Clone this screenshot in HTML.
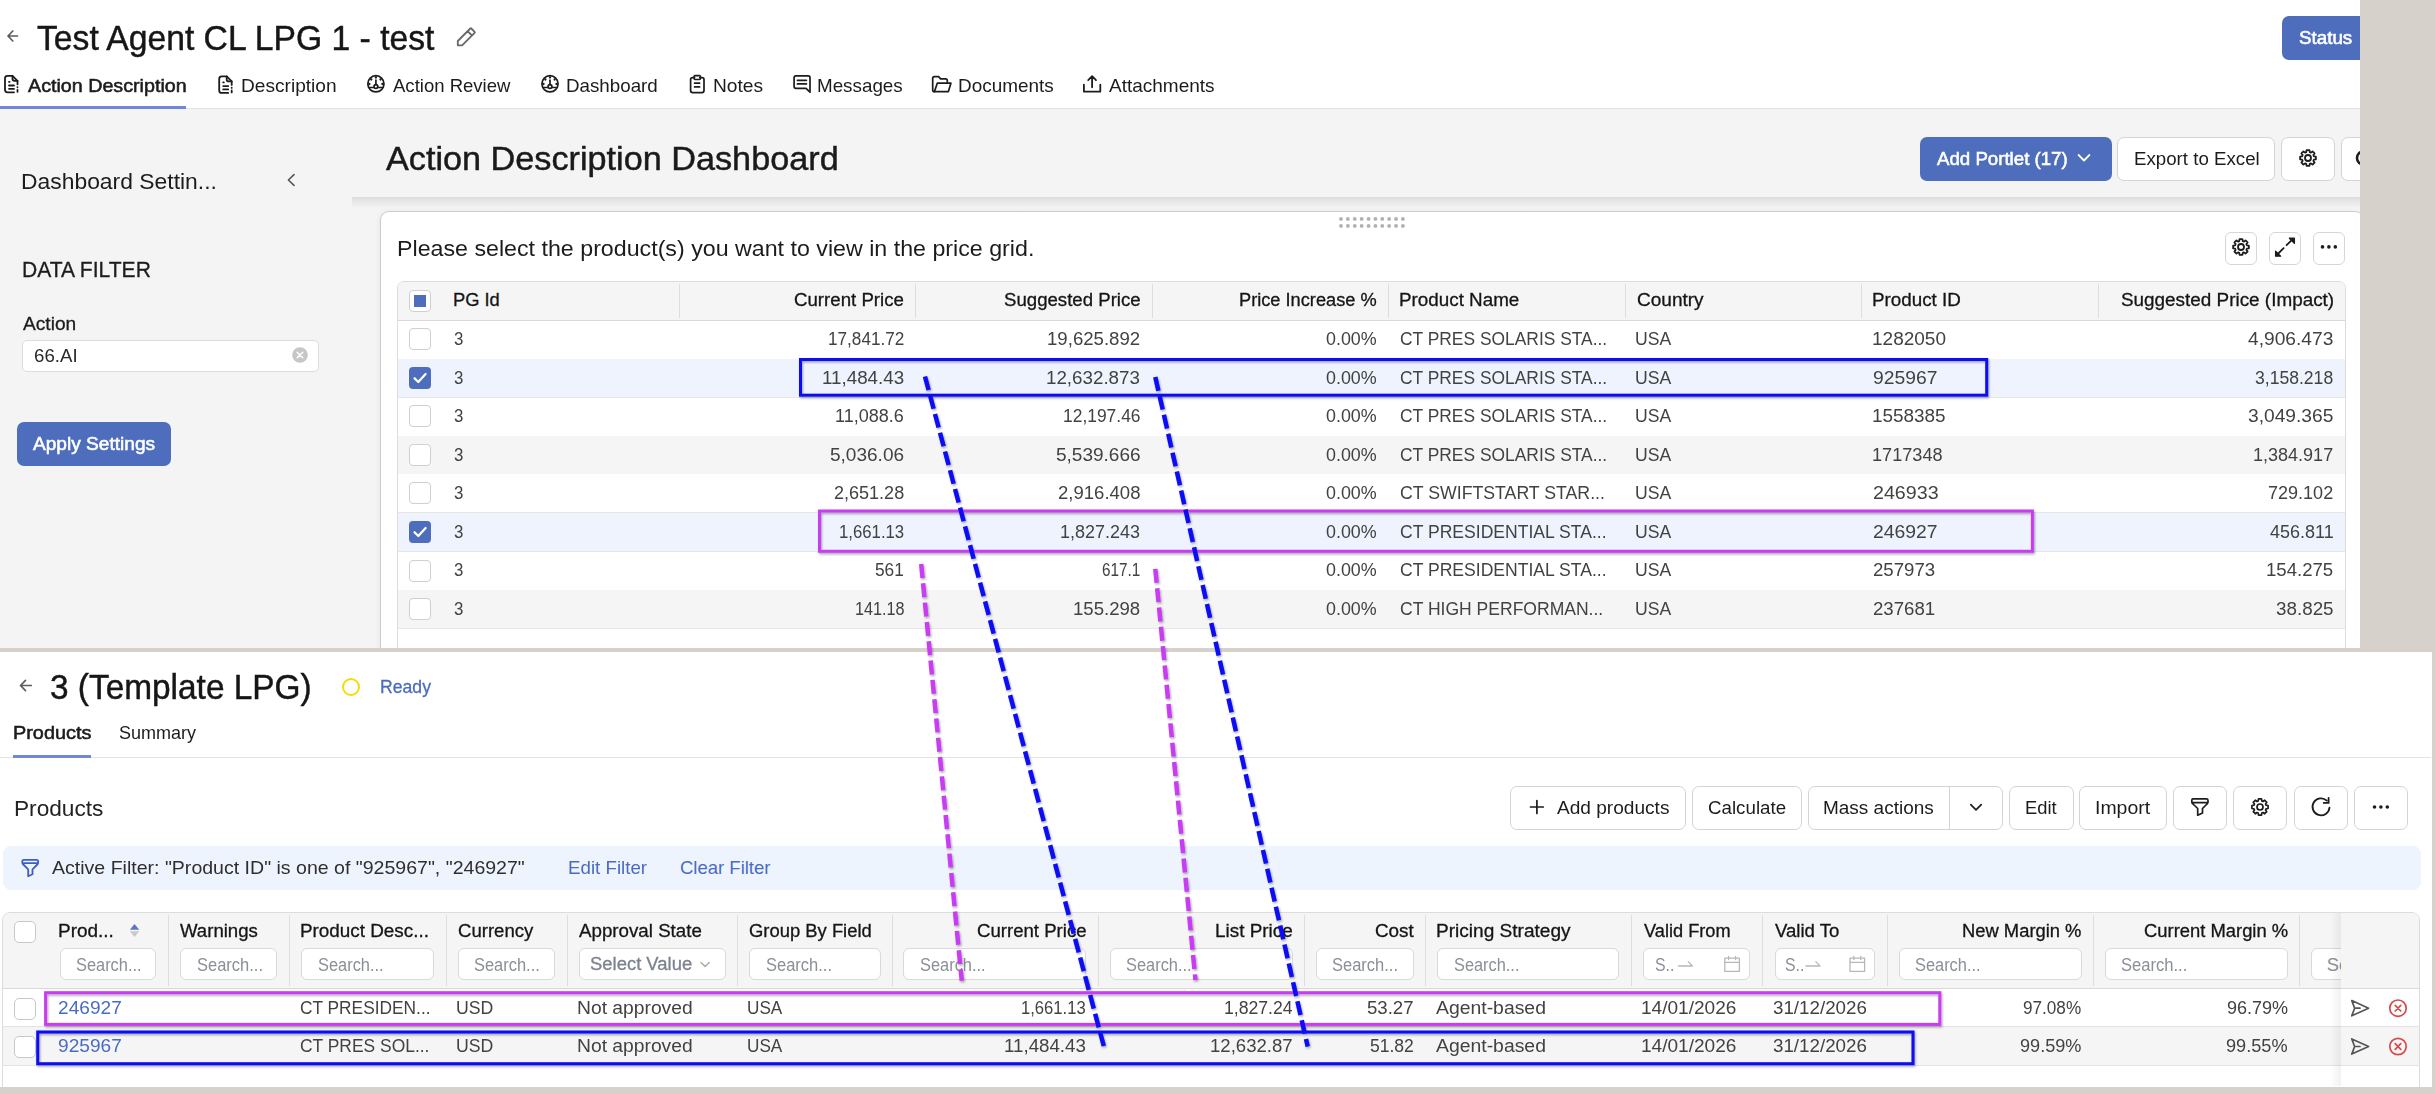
<!DOCTYPE html>
<html><head><meta charset="utf-8"><style>
html,body{margin:0;padding:0;}
body{width:2435px;height:1094px;position:relative;overflow:hidden;background:#ffffff;font-family:"Liberation Sans",sans-serif;}
body>div{position:absolute;box-sizing:border-box;}
.t{white-space:nowrap;line-height:1.117;transform-origin:0 0;}
svg{position:absolute;overflow:visible;}
</style></head><body>
<div style="left:0px;top:108px;width:2360px;height:1px;background:#e3e3e3"></div>
<div style="left:0px;top:109px;width:2360px;height:539px;background:#f4f4f4"></div>
<div style="left:0px;top:106px;width:186px;height:3px;background:#6d88d6"></div>
<div style="left:352px;top:197px;width:2008px;height:14px;background:linear-gradient(#dcdcdc,#ebebeb 45%,#f3f3f3 80%,#f4f4f4)"></div>
<div style="left:380px;top:211px;width:1984px;height:460px;background:#fff;border:1px solid #cccccc;border-radius:9px;box-shadow:-2px 0 4px rgba(0,0,0,0.04)"></div>
<div style="left:2360px;top:0px;width:75px;height:652px;background:#d6d1cb"></div>
<div class="t" style="left:37.10px;top:18.99px;font-size:34.6px;font-weight:400;color:#161616;-webkit-text-stroke:0.45px #161616;transform:scaleX(0.9738);">Test Agent CL LPG 1 - test</div>
<div style="left:2282px;top:16px;width:90px;height:44px;background:#4e6ebd;border-radius:7px"></div>
<div class="t" style="left:2299.10px;top:28.47px;font-size:18.6px;font-weight:400;color:#ffffff;-webkit-text-stroke:0.55px #ffffff;transform:scaleX(1.0092);">Status</div>
<div class="t" style="left:27.70px;top:76.47px;font-size:18.6px;font-weight:400;color:#1c1c1c;-webkit-text-stroke:0.55px #1c1c1c;transform:scaleX(1.0588);">Action Description</div>
<div class="t" style="left:241.37px;top:76.47px;font-size:18.6px;font-weight:400;color:#1c1c1c;transform:scaleX(1.0277);">Description</div>
<div class="t" style="left:393.00px;top:76.47px;font-size:18.6px;font-weight:400;color:#1c1c1c;transform:scaleX(0.9968);">Action Review</div>
<div class="t" style="left:565.59px;top:76.47px;font-size:18.6px;font-weight:400;color:#1c1c1c;transform:scaleX(1.0087);">Dashboard</div>
<div class="t" style="left:712.67px;top:76.47px;font-size:18.6px;font-weight:400;color:#1c1c1c;transform:scaleX(1.0322);">Notes</div>
<div class="t" style="left:817.29px;top:76.47px;font-size:18.6px;font-weight:400;color:#1c1c1c;transform:scaleX(1.0114);">Messages</div>
<div class="t" style="left:957.58px;top:76.47px;font-size:18.6px;font-weight:400;color:#1c1c1c;transform:scaleX(1.0179);">Documents</div>
<div class="t" style="left:1109.30px;top:76.47px;font-size:18.6px;font-weight:400;color:#1c1c1c;transform:scaleX(1.0218);">Attachments</div>
<div class="t" style="left:21.38px;top:168.94px;font-size:22.5px;font-weight:400;color:#1c1c1c;transform:scaleX(1.0170);">Dashboard Settin...</div>
<div class="t" style="left:22.47px;top:256.67px;font-size:22.8px;font-weight:400;color:#1c1c1c;-webkit-text-stroke:0.3px #1c1c1c;transform:scaleX(0.9251);">DATA FILTER</div>
<div class="t" style="left:22.70px;top:314.47px;font-size:18.6px;font-weight:400;color:#1c1c1c;-webkit-text-stroke:0.3px #1c1c1c;transform:scaleX(1.0285);">Action</div>
<div style="left:22px;top:340px;width:297px;height:32px;background:#fff;border:1px solid #dcdcdc;border-radius:5px"></div>
<div class="t" style="left:33.90px;top:345.83px;font-size:18.2px;font-weight:400;color:#2a2a2a;transform:scaleX(1.0262);">66.AI</div>
<div style="left:17px;top:422px;width:154px;height:44px;background:#4e6ebd;border-radius:7px"></div>
<div class="t" style="left:33.30px;top:433.29px;font-size:18.8px;font-weight:400;color:#ffffff;-webkit-text-stroke:0.55px #ffffff;transform:scaleX(1.0170);">Apply Settings</div>
<div class="t" style="left:386.00px;top:139.98px;font-size:33.5px;font-weight:400;color:#1a1a1a;-webkit-text-stroke:0.45px #1a1a1a;transform:scaleX(1.0214);">Action Description Dashboard</div>
<div style="left:1920px;top:137px;width:192px;height:44px;background:#4e6ebd;border-radius:7px"></div>
<div class="t" style="left:1936.60px;top:148.74px;font-size:18.3px;font-weight:400;color:#ffffff;-webkit-text-stroke:0.55px #ffffff;transform:scaleX(1.0209);">Add Portlet (17)</div>
<div style="left:2117px;top:137px;width:158px;height:44px;background:#fff;border:1px solid #d4d4d4;border-radius:7px"></div>
<div class="t" style="left:2133.51px;top:148.20px;font-size:18.9px;font-weight:400;color:#1c1c1c;transform:scaleX(0.9892);">Export to Excel</div>
<div style="left:2281px;top:137px;width:54px;height:44px;background:#fff;border:1px solid #d4d4d4;border-radius:7px"></div>
<div style="left:2341px;top:137px;width:40px;height:44px;background:#fff;border:1px solid #d4d4d4;border-radius:7px"></div>
<div class="t" style="left:396.97px;top:235.94px;font-size:22.5px;font-weight:400;color:#1c1c1c;transform:scaleX(1.0316);">Please select the product(s) you want to view in the price grid.</div>
<div style="left:2225px;top:232px;width:32px;height:33px;background:#fff;border:1px solid #d6d6d6;border-radius:6px"></div>
<div style="left:2269px;top:232px;width:32px;height:33px;background:#fff;border:1px solid #d6d6d6;border-radius:6px"></div>
<div style="left:2313px;top:232px;width:32px;height:33px;background:#fff;border:1px solid #d6d6d6;border-radius:6px"></div>
<div style="left:397px;top:281px;width:1949px;height:380px;border:1px solid #dcdcdc;border-radius:7px;background:#fff"></div>
<div style="left:398px;top:282px;width:1947px;height:38px;background:#f5f5f5;border-radius:6px 6px 0 0"></div>
<div style="left:397px;top:320px;width:1949px;height:1px;background:#d9d9d9"></div>
<div style="left:398px;top:321px;width:1947px;height:38px;background:#ffffff"></div>
<div style="left:398px;top:359px;width:1947px;height:1px;background:#e6e6e6"></div>
<div style="left:398px;top:359px;width:1947px;height:38px;background:#eff3fd"></div>
<div style="left:398px;top:397px;width:1947px;height:1px;background:#e6e6e6"></div>
<div style="left:398px;top:398px;width:1947px;height:38px;background:#ffffff"></div>
<div style="left:398px;top:436px;width:1947px;height:1px;background:#e6e6e6"></div>
<div style="left:398px;top:436px;width:1947px;height:38px;background:#f5f5f5"></div>
<div style="left:398px;top:474px;width:1947px;height:1px;background:#e6e6e6"></div>
<div style="left:398px;top:474px;width:1947px;height:38px;background:#ffffff"></div>
<div style="left:398px;top:512px;width:1947px;height:1px;background:#e6e6e6"></div>
<div style="left:398px;top:513px;width:1947px;height:38px;background:#eff3fd"></div>
<div style="left:398px;top:551px;width:1947px;height:1px;background:#e6e6e6"></div>
<div style="left:398px;top:552px;width:1947px;height:38px;background:#ffffff"></div>
<div style="left:398px;top:590px;width:1947px;height:1px;background:#e6e6e6"></div>
<div style="left:398px;top:590px;width:1947px;height:38px;background:#f5f5f5"></div>
<div style="left:398px;top:628px;width:1947px;height:1px;background:#e6e6e6"></div>
<div style="left:679px;top:284px;width:1px;height:34px;background:#dedede"></div>
<div style="left:915px;top:284px;width:1px;height:34px;background:#dedede"></div>
<div style="left:1152px;top:284px;width:1px;height:34px;background:#dedede"></div>
<div style="left:1388px;top:284px;width:1px;height:34px;background:#dedede"></div>
<div style="left:1625px;top:284px;width:1px;height:34px;background:#dedede"></div>
<div style="left:1861px;top:284px;width:1px;height:34px;background:#dedede"></div>
<div style="left:2098px;top:284px;width:1px;height:34px;background:#dedede"></div>
<div class="t" style="left:453.00px;top:289.74px;font-size:18.3px;font-weight:400;color:#151515;-webkit-text-stroke:0.3px #151515;">PG Id</div>
<div class="t" style="left:794.20px;top:289.74px;font-size:18.3px;font-weight:400;color:#151515;-webkit-text-stroke:0.3px #151515;transform:scaleX(1.0203);">Current Price</div>
<div class="t" style="left:1003.50px;top:289.74px;font-size:18.3px;font-weight:400;color:#151515;-webkit-text-stroke:0.3px #151515;transform:scaleX(1.0188);">Suggested Price</div>
<div class="t" style="left:1239.00px;top:289.74px;font-size:18.3px;font-weight:400;color:#151515;-webkit-text-stroke:0.3px #151515;transform:scaleX(0.9962);">Price Increase %</div>
<div class="t" style="left:1399.37px;top:289.74px;font-size:18.3px;font-weight:400;color:#151515;-webkit-text-stroke:0.3px #151515;transform:scaleX(1.0296);">Product Name</div>
<div class="t" style="left:1636.50px;top:289.74px;font-size:18.3px;font-weight:400;color:#151515;-webkit-text-stroke:0.3px #151515;transform:scaleX(1.0405);">Country</div>
<div class="t" style="left:1871.97px;top:289.74px;font-size:18.3px;font-weight:400;color:#151515;-webkit-text-stroke:0.3px #151515;transform:scaleX(1.0286);">Product ID</div>
<div class="t" style="left:2121.00px;top:289.74px;font-size:18.3px;font-weight:400;color:#151515;-webkit-text-stroke:0.3px #151515;transform:scaleX(1.0333);">Suggested Price (Impact)</div>
<div class="t" style="left:454.20px;top:328.74px;font-size:18.3px;font-weight:400;color:#424242;transform:scaleX(0.9200);">3</div>
<div class="t" style="left:827.76px;top:328.74px;font-size:18.3px;font-weight:400;color:#424242;transform:scaleX(0.9381);">17,841.72</div>
<div class="t" style="left:1047.18px;top:328.74px;font-size:18.3px;font-weight:400;color:#424242;transform:scaleX(1.0185);">19,625.892</div>
<div class="t" style="left:1326.00px;top:328.74px;font-size:18.3px;font-weight:400;color:#424242;transform:scaleX(0.9771);">0.00%</div>
<div class="t" style="left:1399.50px;top:328.74px;font-size:18.3px;font-weight:400;color:#424242;transform:scaleX(0.9516);">CT PRES SOLARIS STA...</div>
<div class="t" style="left:1634.64px;top:328.74px;font-size:18.3px;font-weight:400;color:#424242;transform:scaleX(0.9627);">USA</div>
<div class="t" style="left:1871.56px;top:328.74px;font-size:18.3px;font-weight:400;color:#424242;transform:scaleX(1.0400);">1282050</div>
<div class="t" style="left:2247.80px;top:328.74px;font-size:18.3px;font-weight:400;color:#424242;transform:scaleX(1.0498);">4,906.473</div>
<div style="left:409px;top:328px;width:22px;height:22px;background:#fff;border:1px solid #cfcfcf;border-radius:4px"></div>
<div class="t" style="left:454.20px;top:367.74px;font-size:18.3px;font-weight:400;color:#424242;transform:scaleX(0.9200);">3</div>
<div class="t" style="left:821.97px;top:367.74px;font-size:18.3px;font-weight:400;color:#424242;transform:scaleX(1.0266);">11,484.43</div>
<div class="t" style="left:1046.47px;top:367.74px;font-size:18.3px;font-weight:400;color:#424242;transform:scaleX(1.0263);">12,632.873</div>
<div class="t" style="left:1326.00px;top:367.74px;font-size:18.3px;font-weight:400;color:#424242;transform:scaleX(0.9771);">0.00%</div>
<div class="t" style="left:1399.50px;top:367.74px;font-size:18.3px;font-weight:400;color:#424242;transform:scaleX(0.9516);">CT PRES SOLARIS STA...</div>
<div class="t" style="left:1634.64px;top:367.74px;font-size:18.3px;font-weight:400;color:#424242;transform:scaleX(0.9627);">USA</div>
<div class="t" style="left:1872.60px;top:367.74px;font-size:18.3px;font-weight:400;color:#424242;transform:scaleX(1.0553);">925967</div>
<div class="t" style="left:2255.00px;top:367.74px;font-size:18.3px;font-weight:400;color:#424242;transform:scaleX(0.9611);">3,158.218</div>
<div style="left:409px;top:367px;width:22px;height:22px;background:#4e6ebd;border-radius:4px"></div>
<svg style="left:409px;top:367px" width="22" height="22" viewBox="0 0 22 22"><path d="M5.5 11.2 L9.3 15 L16.6 7" fill="none" stroke="#fff" stroke-width="2.2" stroke-linecap="round" stroke-linejoin="round"/></svg>
<div class="t" style="left:454.20px;top:405.74px;font-size:18.3px;font-weight:400;color:#424242;transform:scaleX(0.9200);">3</div>
<div class="t" style="left:835.32px;top:405.74px;font-size:18.3px;font-weight:400;color:#424242;transform:scaleX(0.9849);">11,088.6</div>
<div class="t" style="left:1062.85px;top:405.74px;font-size:18.3px;font-weight:400;color:#424242;transform:scaleX(0.9531);">12,197.46</div>
<div class="t" style="left:1326.00px;top:405.74px;font-size:18.3px;font-weight:400;color:#424242;transform:scaleX(0.9771);">0.00%</div>
<div class="t" style="left:1399.50px;top:405.74px;font-size:18.3px;font-weight:400;color:#424242;transform:scaleX(0.9516);">CT PRES SOLARIS STA...</div>
<div class="t" style="left:1634.64px;top:405.74px;font-size:18.3px;font-weight:400;color:#424242;transform:scaleX(0.9627);">USA</div>
<div class="t" style="left:1871.57px;top:405.74px;font-size:18.3px;font-weight:400;color:#424242;transform:scaleX(1.0342);">1558385</div>
<div class="t" style="left:2247.80px;top:405.74px;font-size:18.3px;font-weight:400;color:#424242;transform:scaleX(1.0498);">3,049.365</div>
<div style="left:409px;top:405px;width:22px;height:22px;background:#fff;border:1px solid #cfcfcf;border-radius:4px"></div>
<div class="t" style="left:454.20px;top:444.74px;font-size:18.3px;font-weight:400;color:#424242;transform:scaleX(0.9200);">3</div>
<div class="t" style="left:830.00px;top:444.74px;font-size:18.3px;font-weight:400;color:#424242;transform:scaleX(1.0409);">5,036.06</div>
<div class="t" style="left:1055.80px;top:444.74px;font-size:18.3px;font-weight:400;color:#424242;transform:scaleX(1.0399);">5,539.666</div>
<div class="t" style="left:1326.00px;top:444.74px;font-size:18.3px;font-weight:400;color:#424242;transform:scaleX(0.9771);">0.00%</div>
<div class="t" style="left:1399.50px;top:444.74px;font-size:18.3px;font-weight:400;color:#424242;transform:scaleX(0.9516);">CT PRES SOLARIS STA...</div>
<div class="t" style="left:1634.64px;top:444.74px;font-size:18.3px;font-weight:400;color:#424242;transform:scaleX(0.9627);">USA</div>
<div class="t" style="left:1871.61px;top:444.74px;font-size:18.3px;font-weight:400;color:#424242;transform:scaleX(0.9914);">1717348</div>
<div class="t" style="left:2253.01px;top:444.74px;font-size:18.3px;font-weight:400;color:#424242;transform:scaleX(0.9855);">1,384.917</div>
<div style="left:409px;top:444px;width:22px;height:22px;background:#fff;border:1px solid #cfcfcf;border-radius:4px"></div>
<div class="t" style="left:454.20px;top:482.74px;font-size:18.3px;font-weight:400;color:#424242;transform:scaleX(0.9200);">3</div>
<div class="t" style="left:833.90px;top:482.74px;font-size:18.3px;font-weight:400;color:#424242;transform:scaleX(0.9860);">2,651.28</div>
<div class="t" style="left:1057.90px;top:482.74px;font-size:18.3px;font-weight:400;color:#424242;transform:scaleX(1.0140);">2,916.408</div>
<div class="t" style="left:1326.00px;top:482.74px;font-size:18.3px;font-weight:400;color:#424242;transform:scaleX(0.9771);">0.00%</div>
<div class="t" style="left:1399.50px;top:482.74px;font-size:18.3px;font-weight:400;color:#424242;transform:scaleX(0.9684);">CT SWIFTSTART STAR...</div>
<div class="t" style="left:1634.64px;top:482.74px;font-size:18.3px;font-weight:400;color:#424242;transform:scaleX(0.9627);">USA</div>
<div class="t" style="left:1872.60px;top:482.74px;font-size:18.3px;font-weight:400;color:#424242;transform:scaleX(1.0750);">246933</div>
<div class="t" style="left:2268.00px;top:482.74px;font-size:18.3px;font-weight:400;color:#424242;transform:scaleX(0.9861);">729.102</div>
<div style="left:409px;top:482px;width:22px;height:22px;background:#fff;border:1px solid #cfcfcf;border-radius:4px"></div>
<div class="t" style="left:454.20px;top:521.74px;font-size:18.3px;font-weight:400;color:#424242;transform:scaleX(0.9200);">3</div>
<div class="t" style="left:838.88px;top:521.74px;font-size:18.3px;font-weight:400;color:#424242;transform:scaleX(0.9158);">1,661.13</div>
<div class="t" style="left:1060.42px;top:521.74px;font-size:18.3px;font-weight:400;color:#424242;transform:scaleX(0.9830);">1,827.243</div>
<div class="t" style="left:1326.00px;top:521.74px;font-size:18.3px;font-weight:400;color:#424242;transform:scaleX(0.9771);">0.00%</div>
<div class="t" style="left:1399.50px;top:521.74px;font-size:18.3px;font-weight:400;color:#424242;transform:scaleX(0.9607);">CT PRESIDENTIAL STA...</div>
<div class="t" style="left:1634.64px;top:521.74px;font-size:18.3px;font-weight:400;color:#424242;transform:scaleX(0.9627);">USA</div>
<div class="t" style="left:1872.60px;top:521.74px;font-size:18.3px;font-weight:400;color:#424242;transform:scaleX(1.0586);">246927</div>
<div class="t" style="left:2269.50px;top:521.74px;font-size:18.3px;font-weight:400;color:#424242;transform:scaleX(0.9836);">456.811</div>
<div style="left:409px;top:521px;width:22px;height:22px;background:#4e6ebd;border-radius:4px"></div>
<svg style="left:409px;top:521px" width="22" height="22" viewBox="0 0 22 22"><path d="M5.5 11.2 L9.3 15 L16.6 7" fill="none" stroke="#fff" stroke-width="2.2" stroke-linecap="round" stroke-linejoin="round"/></svg>
<div class="t" style="left:454.20px;top:559.74px;font-size:18.3px;font-weight:400;color:#424242;transform:scaleX(0.9200);">3</div>
<div class="t" style="left:875.20px;top:559.74px;font-size:18.3px;font-weight:400;color:#424242;transform:scaleX(0.9461);">561</div>
<div class="t" style="left:1102.00px;top:559.74px;font-size:18.3px;font-weight:400;color:#424242;transform:scaleX(0.8381);">617.1</div>
<div class="t" style="left:1326.00px;top:559.74px;font-size:18.3px;font-weight:400;color:#424242;transform:scaleX(0.9771);">0.00%</div>
<div class="t" style="left:1399.50px;top:559.74px;font-size:18.3px;font-weight:400;color:#424242;transform:scaleX(0.9607);">CT PRESIDENTIAL STA...</div>
<div class="t" style="left:1634.64px;top:559.74px;font-size:18.3px;font-weight:400;color:#424242;transform:scaleX(0.9627);">USA</div>
<div class="t" style="left:1872.60px;top:559.74px;font-size:18.3px;font-weight:400;color:#424242;transform:scaleX(1.0191);">257973</div>
<div class="t" style="left:2265.98px;top:559.74px;font-size:18.3px;font-weight:400;color:#424242;transform:scaleX(1.0167);">154.275</div>
<div style="left:409px;top:560px;width:22px;height:22px;background:#fff;border:1px solid #cfcfcf;border-radius:4px"></div>
<div class="t" style="left:454.20px;top:598.74px;font-size:18.3px;font-weight:400;color:#424242;transform:scaleX(0.9200);">3</div>
<div class="t" style="left:854.51px;top:598.74px;font-size:18.3px;font-weight:400;color:#424242;transform:scaleX(0.8859);">141.18</div>
<div class="t" style="left:1073.18px;top:598.74px;font-size:18.3px;font-weight:400;color:#424242;transform:scaleX(1.0167);">155.298</div>
<div class="t" style="left:1326.00px;top:598.74px;font-size:18.3px;font-weight:400;color:#424242;transform:scaleX(0.9771);">0.00%</div>
<div class="t" style="left:1399.50px;top:598.74px;font-size:18.3px;font-weight:400;color:#424242;transform:scaleX(0.9589);">CT HIGH PERFORMAN...</div>
<div class="t" style="left:1634.64px;top:598.74px;font-size:18.3px;font-weight:400;color:#424242;transform:scaleX(0.9627);">USA</div>
<div class="t" style="left:1872.60px;top:598.74px;font-size:18.3px;font-weight:400;color:#424242;transform:scaleX(1.0191);">237681</div>
<div class="t" style="left:2275.60px;top:598.74px;font-size:18.3px;font-weight:400;color:#424242;transform:scaleX(1.0296);">38.825</div>
<div style="left:409px;top:598px;width:22px;height:22px;background:#fff;border:1px solid #cfcfcf;border-radius:4px"></div>
<div style="left:409px;top:290px;width:22px;height:22px;background:#fff;border:1px solid #cfcfcf;border-radius:4px"></div>
<div style="left:414px;top:295px;width:12px;height:12px;background:#4e6ebd"></div>
<div style="left:0px;top:652px;width:2435px;height:442px;background:#ffffff"></div>
<div style="left:0px;top:648px;width:2435px;height:4px;background:#d6d1cb"></div>
<div class="t" style="left:50.13px;top:668.26px;font-size:34.3px;font-weight:400;color:#161616;-webkit-text-stroke:0.45px #161616;transform:scaleX(0.9736);">3 (Template LPG)</div>
<div style="left:342px;top:678px;width:18px;height:18px;border:2px solid #f2dc0a;border-radius:50%"></div>
<div class="t" style="left:379.65px;top:676.56px;font-size:18.5px;font-weight:400;color:#4a6bc4;-webkit-text-stroke:0.3px #4a6bc4;transform:scaleX(0.9525);">Ready</div>
<div class="t" style="left:12.51px;top:722.83px;font-size:18.2px;font-weight:400;color:#1c1c1c;-webkit-text-stroke:0.55px #1c1c1c;transform:scaleX(1.0923);">Products</div>
<div class="t" style="left:119.20px;top:722.83px;font-size:18.2px;font-weight:400;color:#1c1c1c;transform:scaleX(0.9909);">Summary</div>
<div style="left:0px;top:757px;width:2431px;height:1px;background:#e3e3e3"></div>
<div style="left:13px;top:755px;width:78px;height:3px;background:#6d88d6"></div>
<div class="t" style="left:13.90px;top:795.85px;font-size:22.6px;font-weight:400;color:#222222;transform:scaleX(1.0027);">Products</div>
<div style="left:1510px;top:786px;width:176px;height:44px;background:#fff;border:1px solid #d4d4d4;border-radius:7px"></div>
<div style="left:1692px;top:786px;width:110px;height:44px;background:#fff;border:1px solid #d4d4d4;border-radius:7px"></div>
<div style="left:1808px;top:786px;width:195px;height:44px;background:#fff;border:1px solid #d4d4d4;border-radius:7px"></div>
<div style="left:2009px;top:786px;width:65px;height:44px;background:#fff;border:1px solid #d4d4d4;border-radius:7px"></div>
<div style="left:2079px;top:786px;width:88px;height:44px;background:#fff;border:1px solid #d4d4d4;border-radius:7px"></div>
<div style="left:2173px;top:786px;width:54px;height:44px;background:#fff;border:1px solid #d4d4d4;border-radius:7px"></div>
<div style="left:2233px;top:786px;width:54px;height:44px;background:#fff;border:1px solid #d4d4d4;border-radius:7px"></div>
<div style="left:2294px;top:786px;width:54px;height:44px;background:#fff;border:1px solid #d4d4d4;border-radius:7px"></div>
<div style="left:2354px;top:786px;width:54px;height:44px;background:#fff;border:1px solid #d4d4d4;border-radius:7px"></div>
<div style="left:1949px;top:787px;width:1px;height:42px;background:#d4d4d4"></div>
<div class="t" style="left:1557.30px;top:798.38px;font-size:18.7px;font-weight:400;color:#1c1c1c;transform:scaleX(1.0212);">Add products</div>
<div class="t" style="left:1708.20px;top:798.38px;font-size:18.7px;font-weight:400;color:#1c1c1c;transform:scaleX(1.0024);">Calculate</div>
<div class="t" style="left:1823.28px;top:798.38px;font-size:18.7px;font-weight:400;color:#1c1c1c;transform:scaleX(1.0157);">Mass actions</div>
<div class="t" style="left:2024.92px;top:798.38px;font-size:18.7px;font-weight:400;color:#1c1c1c;transform:scaleX(0.9810);">Edit</div>
<div class="t" style="left:2094.66px;top:798.38px;font-size:18.7px;font-weight:400;color:#1c1c1c;transform:scaleX(1.0404);">Import</div>
<div style="left:3px;top:846px;width:2418px;height:44px;background:#eef4fe;border-radius:8px"></div>
<div class="t" style="left:52.40px;top:857.56px;font-size:18.5px;font-weight:400;color:#2e2e2e;transform:scaleX(1.0561);">Active Filter: &quot;Product ID&quot; is one of &quot;925967&quot;, &quot;246927&quot;</div>
<div class="t" style="left:568.29px;top:857.56px;font-size:18.5px;font-weight:400;color:#4a6bc4;transform:scaleX(1.0121);">Edit Filter</div>
<div class="t" style="left:680.00px;top:857.56px;font-size:18.5px;font-weight:400;color:#4a6bc4;">Clear Filter</div>
<div style="left:2px;top:912px;width:2418px;height:200px;border:1px solid #dcdcdc;border-radius:8px;background:#fff"></div>
<div style="left:3px;top:913px;width:2416px;height:75px;background:#f5f5f5;border-radius:7px 7px 0 0"></div>
<div style="left:2px;top:988px;width:2418px;height:1px;background:#d9d9d9"></div>
<div style="left:3px;top:1027px;width:2416px;height:38px;background:#f5f5f5"></div>
<div style="left:2px;top:1026px;width:2418px;height:1px;background:#e3e3e3"></div>
<div style="left:2px;top:1065px;width:2418px;height:1px;background:#e3e3e3"></div>
<div style="left:168px;top:915px;width:1px;height:71px;background:#dedede"></div>
<div style="left:289px;top:915px;width:1px;height:71px;background:#dedede"></div>
<div style="left:446px;top:915px;width:1px;height:71px;background:#dedede"></div>
<div style="left:567px;top:915px;width:1px;height:71px;background:#dedede"></div>
<div style="left:737px;top:915px;width:1px;height:71px;background:#dedede"></div>
<div style="left:892px;top:915px;width:1px;height:71px;background:#dedede"></div>
<div style="left:1098px;top:915px;width:1px;height:71px;background:#dedede"></div>
<div style="left:1304px;top:915px;width:1px;height:71px;background:#dedede"></div>
<div style="left:1425px;top:915px;width:1px;height:71px;background:#dedede"></div>
<div style="left:1631px;top:915px;width:1px;height:71px;background:#dedede"></div>
<div style="left:1762px;top:915px;width:1px;height:71px;background:#dedede"></div>
<div style="left:1887px;top:915px;width:1px;height:71px;background:#dedede"></div>
<div style="left:2093px;top:915px;width:1px;height:71px;background:#dedede"></div>
<div style="left:2299px;top:915px;width:1px;height:71px;background:#dedede"></div>
<div style="left:14px;top:921px;width:22px;height:22px;background:#fff;border:1px solid #c8c8c8;border-radius:5px"></div>
<div class="t" style="left:57.96px;top:920.74px;font-size:18.3px;font-weight:400;color:#151515;-webkit-text-stroke:0.3px #151515;transform:scaleX(1.0372);">Prod...</div>
<div style="left:59.6px;top:948px;width:96.70000000000002px;height:32px;background:#fff;border:1px solid #d9d9d9;border-radius:6px"></div>
<div class="t" style="left:75.80px;top:954.74px;font-size:18.3px;font-weight:400;color:#8a8f98;transform:scaleX(0.8962);">Search...</div>
<div class="t" style="left:180.30px;top:920.74px;font-size:18.3px;font-weight:400;color:#151515;-webkit-text-stroke:0.3px #151515;transform:scaleX(1.0171);">Warnings</div>
<div style="left:180.3px;top:948px;width:96.89999999999998px;height:32px;background:#fff;border:1px solid #d9d9d9;border-radius:6px"></div>
<div class="t" style="left:196.60px;top:954.74px;font-size:18.3px;font-weight:400;color:#8a8f98;transform:scaleX(0.9018);">Search...</div>
<div class="t" style="left:300.17px;top:920.74px;font-size:18.3px;font-weight:400;color:#151515;-webkit-text-stroke:0.3px #151515;transform:scaleX(1.0318);">Product Desc...</div>
<div style="left:301.2px;top:948px;width:133.0px;height:32px;background:#fff;border:1px solid #d9d9d9;border-radius:6px"></div>
<div class="t" style="left:317.80px;top:954.74px;font-size:18.3px;font-weight:400;color:#8a8f98;transform:scaleX(0.8976);">Search...</div>
<div class="t" style="left:458.20px;top:920.74px;font-size:18.3px;font-weight:400;color:#151515;-webkit-text-stroke:0.3px #151515;transform:scaleX(1.0157);">Currency</div>
<div style="left:458.2px;top:948px;width:96.80000000000001px;height:32px;background:#fff;border:1px solid #d9d9d9;border-radius:6px"></div>
<div class="t" style="left:474.00px;top:954.74px;font-size:18.3px;font-weight:400;color:#8a8f98;transform:scaleX(0.8990);">Search...</div>
<div class="t" style="left:579.40px;top:920.74px;font-size:18.3px;font-weight:400;color:#151515;-webkit-text-stroke:0.3px #151515;transform:scaleX(1.0246);">Approval State</div>
<div style="left:579.4px;top:948px;width:146.80000000000007px;height:32px;background:#fff;border:1px solid #d9d9d9;border-radius:6px"></div>
<div class="t" style="left:590.20px;top:953.74px;font-size:18.3px;font-weight:400;color:#7b828f;-webkit-text-stroke:0.3px #7b828f;transform:scaleX(1.0087);">Select Value</div>
<div class="t" style="left:749.40px;top:920.74px;font-size:18.3px;font-weight:400;color:#151515;-webkit-text-stroke:0.3px #151515;transform:scaleX(1.0070);">Group By Field</div>
<div style="left:749.4px;top:948px;width:131.20000000000005px;height:32px;background:#fff;border:1px solid #d9d9d9;border-radius:6px"></div>
<div class="t" style="left:765.70px;top:954.74px;font-size:18.3px;font-weight:400;color:#8a8f98;transform:scaleX(0.9018);">Search...</div>
<div class="t" style="left:976.60px;top:920.74px;font-size:18.3px;font-weight:400;color:#151515;-webkit-text-stroke:0.3px #151515;transform:scaleX(1.0175);">Current Price</div>
<div style="left:902.9px;top:948px;width:183.10000000000002px;height:32px;background:#fff;border:1px solid #d9d9d9;border-radius:6px"></div>
<div class="t" style="left:919.70px;top:954.74px;font-size:18.3px;font-weight:400;color:#8a8f98;transform:scaleX(0.8976);">Search...</div>
<div class="t" style="left:1214.97px;top:920.74px;font-size:18.3px;font-weight:400;color:#151515;-webkit-text-stroke:0.3px #151515;transform:scaleX(1.0336);">List Price</div>
<div style="left:1110px;top:948px;width:182.5px;height:32px;background:#fff;border:1px solid #d9d9d9;border-radius:6px"></div>
<div class="t" style="left:1125.80px;top:954.74px;font-size:18.3px;font-weight:400;color:#8a8f98;transform:scaleX(0.8976);">Search...</div>
<div class="t" style="left:1375.00px;top:920.74px;font-size:18.3px;font-weight:400;color:#151515;-webkit-text-stroke:0.3px #151515;transform:scaleX(1.0317);">Cost</div>
<div style="left:1316px;top:948px;width:97.70000000000005px;height:32px;background:#fff;border:1px solid #d9d9d9;border-radius:6px"></div>
<div class="t" style="left:1332.00px;top:954.74px;font-size:18.3px;font-weight:400;color:#8a8f98;transform:scaleX(0.9018);">Search...</div>
<div class="t" style="left:1435.56px;top:920.74px;font-size:18.3px;font-weight:400;color:#151515;-webkit-text-stroke:0.3px #151515;transform:scaleX(1.0427);">Pricing Strategy</div>
<div style="left:1437px;top:948px;width:182px;height:32px;background:#fff;border:1px solid #d9d9d9;border-radius:6px"></div>
<div class="t" style="left:1453.50px;top:954.74px;font-size:18.3px;font-weight:400;color:#8a8f98;transform:scaleX(0.8948);">Search...</div>
<div class="t" style="left:1644.00px;top:920.74px;font-size:18.3px;font-weight:400;color:#151515;-webkit-text-stroke:0.3px #151515;transform:scaleX(0.9955);">Valid From</div>
<div style="left:1643.4px;top:948px;width:107.09999999999991px;height:32px;background:#fff;border:1px solid #d9d9d9;border-radius:6px"></div>
<div class="t" style="left:1655.00px;top:954.74px;font-size:18.3px;font-weight:400;color:#8a8f98;transform:scaleX(0.8697);">S..</div>
<div class="t" style="left:1774.60px;top:920.74px;font-size:18.3px;font-weight:400;color:#151515;-webkit-text-stroke:0.3px #151515;transform:scaleX(1.0171);">Valid To</div>
<div style="left:1774.6px;top:948px;width:100.80000000000018px;height:32px;background:#fff;border:1px solid #d9d9d9;border-radius:6px"></div>
<div class="t" style="left:1785.00px;top:954.74px;font-size:18.3px;font-weight:400;color:#8a8f98;transform:scaleX(0.8650);">S..</div>
<div class="t" style="left:1961.99px;top:920.74px;font-size:18.3px;font-weight:400;color:#151515;-webkit-text-stroke:0.3px #151515;transform:scaleX(1.0050);">New Margin %</div>
<div style="left:1899.4px;top:948px;width:182.4000000000001px;height:32px;background:#fff;border:1px solid #d9d9d9;border-radius:6px"></div>
<div class="t" style="left:1915.20px;top:954.74px;font-size:18.3px;font-weight:400;color:#8a8f98;transform:scaleX(0.8962);">Search...</div>
<div class="t" style="left:2143.80px;top:920.74px;font-size:18.3px;font-weight:400;color:#151515;-webkit-text-stroke:0.3px #151515;transform:scaleX(1.0063);">Current Margin %</div>
<div style="left:2105.3px;top:948px;width:183.0px;height:32px;background:#fff;border:1px solid #d9d9d9;border-radius:6px"></div>
<div class="t" style="left:2121.00px;top:954.74px;font-size:18.3px;font-weight:400;color:#8a8f98;transform:scaleX(0.9059);">Search...</div>
<div style="left:2311px;top:948px;width:49px;height:32px;background:#fff;border:1px solid #d9d9d9;border-radius:6px"></div>
<div class="t" style="left:2326.80px;top:954.74px;font-size:18.3px;font-weight:400;color:#8a8f98;">Se</div>
<div style="left:14px;top:998px;width:22px;height:22px;background:#fff;border:1px solid #c8c8c8;border-radius:5px"></div>
<div class="t" style="left:58.40px;top:997.74px;font-size:18.3px;font-weight:400;color:#4a6bc4;transform:scaleX(1.0454);">246927</div>
<div class="t" style="left:300.00px;top:997.74px;font-size:18.3px;font-weight:400;color:#424242;transform:scaleX(0.9470);">CT PRESIDEN...</div>
<div class="t" style="left:456.13px;top:997.74px;font-size:18.3px;font-weight:400;color:#424242;transform:scaleX(0.9680);">USD</div>
<div class="t" style="left:576.55px;top:997.74px;font-size:18.3px;font-weight:400;color:#424242;transform:scaleX(1.0540);">Not approved</div>
<div class="t" style="left:747.36px;top:997.74px;font-size:18.3px;font-weight:400;color:#424242;transform:scaleX(0.9386);">USA</div>
<div class="t" style="left:1021.49px;top:997.74px;font-size:18.3px;font-weight:400;color:#424242;transform:scaleX(0.9086);">1,661.13</div>
<div class="t" style="left:1224.04px;top:997.74px;font-size:18.3px;font-weight:400;color:#424242;transform:scaleX(0.9644);">1,827.24</div>
<div class="t" style="left:1367.30px;top:997.74px;font-size:18.3px;font-weight:400;color:#424242;transform:scaleX(1.0180);">53.27</div>
<div class="t" style="left:1436.30px;top:997.74px;font-size:18.3px;font-weight:400;color:#424242;transform:scaleX(1.0604);">Agent-based</div>
<div class="t" style="left:1640.76px;top:997.74px;font-size:18.3px;font-weight:400;color:#424242;transform:scaleX(1.0429);">14/01/2026</div>
<div class="t" style="left:1773.00px;top:997.74px;font-size:18.3px;font-weight:400;color:#424242;transform:scaleX(1.0260);">31/12/2026</div>
<div class="t" style="left:2023.30px;top:997.74px;font-size:18.3px;font-weight:400;color:#424242;transform:scaleX(0.9377);">97.08%</div>
<div class="t" style="left:2226.80px;top:997.74px;font-size:18.3px;font-weight:400;color:#424242;transform:scaleX(0.9863);">96.79%</div>
<div style="left:14px;top:1036px;width:22px;height:22px;background:#fff;border:1px solid #c8c8c8;border-radius:5px"></div>
<div class="t" style="left:58.40px;top:1035.74px;font-size:18.3px;font-weight:400;color:#4a6bc4;transform:scaleX(1.0454);">925967</div>
<div class="t" style="left:300.00px;top:1035.74px;font-size:18.3px;font-weight:400;color:#424242;transform:scaleX(0.9530);">CT PRES SOL...</div>
<div class="t" style="left:456.13px;top:1035.74px;font-size:18.3px;font-weight:400;color:#424242;transform:scaleX(0.9680);">USD</div>
<div class="t" style="left:576.55px;top:1035.74px;font-size:18.3px;font-weight:400;color:#424242;transform:scaleX(1.0540);">Not approved</div>
<div class="t" style="left:747.36px;top:1035.74px;font-size:18.3px;font-weight:400;color:#424242;transform:scaleX(0.9386);">USA</div>
<div class="t" style="left:1004.28px;top:1035.74px;font-size:18.3px;font-weight:400;color:#424242;transform:scaleX(1.0241);">11,484.43</div>
<div class="t" style="left:1209.98px;top:1035.74px;font-size:18.3px;font-weight:400;color:#424242;transform:scaleX(1.0167);">12,632.87</div>
<div class="t" style="left:1370.00px;top:1035.74px;font-size:18.3px;font-weight:400;color:#424242;transform:scaleX(0.9587);">51.82</div>
<div class="t" style="left:1436.30px;top:1035.74px;font-size:18.3px;font-weight:400;color:#424242;transform:scaleX(1.0604);">Agent-based</div>
<div class="t" style="left:1640.76px;top:1035.74px;font-size:18.3px;font-weight:400;color:#424242;transform:scaleX(1.0429);">14/01/2026</div>
<div class="t" style="left:1773.00px;top:1035.74px;font-size:18.3px;font-weight:400;color:#424242;transform:scaleX(1.0260);">31/12/2026</div>
<div class="t" style="left:2020.00px;top:1035.74px;font-size:18.3px;font-weight:400;color:#424242;transform:scaleX(0.9911);">99.59%</div>
<div class="t" style="left:2226.40px;top:1035.74px;font-size:18.3px;font-weight:400;color:#424242;transform:scaleX(0.9927);">99.55%</div>
<div style="left:2330px;top:913px;width:12px;height:173px;background:linear-gradient(90deg,rgba(0,0,0,0),rgba(0,0,0,0.06))"></div>
<div style="left:2341px;top:913px;width:78px;height:75px;background:#f5f5f5;border-radius:0 7px 0 0"></div>
<div style="left:2341px;top:989px;width:78px;height:37px;background:#fff"></div>
<div style="left:2341px;top:1027px;width:78px;height:38px;background:#f5f5f5"></div>
<div style="left:2341px;top:1066px;width:78px;height:21px;background:#fff"></div>
<div style="left:2341px;top:988px;width:78px;height:1px;background:#d9d9d9"></div>
<div style="left:2341px;top:1026px;width:78px;height:1px;background:#e3e3e3"></div>
<div style="left:2341px;top:1065px;width:78px;height:1px;background:#e3e3e3"></div>
<svg style="left:0;top:0" width="2435" height="1094" viewBox="0 0 2435 1094"><path d="M17.5 36 H8 M12.8 31 L8 36 L12.8 41" fill="none" stroke="#5c5c5c" stroke-width="1.7" stroke-linecap="round" stroke-linejoin="round" /><path d="M31.3 685.5 H20.5 M25.5 680.3 L20.5 685.5 L25.5 690.7" fill="none" stroke="#5c5c5c" stroke-width="1.7" stroke-linecap="round" stroke-linejoin="round" /><path d="M457.8 41 L470.3 28.5 Q470.8 28 471.3 28.5 L474.6 31.8 Q475.1 32.3 474.6 32.8 L462.1 45.3 H457.8 Z M467.6 31.2 L471.9 35.5" fill="none" stroke="#686868" stroke-width="1.8" stroke-linecap="round" stroke-linejoin="round" /><path d="M14 92.3 H7.5 Q5 92.3 5 89.8 V78.3 Q5 75.8 7.5 75.8 H12.5 L17.5 80.8 V84.3" fill="none" stroke="#1c1c1c" stroke-width="1.8" stroke-linecap="round" stroke-linejoin="round" /><path d="M12.5 75.8 V78.8 Q12.5 80.8 14.5 80.8 H17.5" fill="none" stroke="#1c1c1c" stroke-width="1.8" stroke-linecap="round" stroke-linejoin="round" /><path d="M9 81.8 H9.6 M9 85.5 H14 M9 88.8 H14 M17.5 87.1 V87.3 M17.5 89.8 V91.8" fill="none" stroke="#1c1c1c" stroke-width="1.8" stroke-linecap="round" stroke-linejoin="round" /><path d="M228.2 92.9 H221.7 Q219.2 92.9 219.2 90.4 V78.9 Q219.2 76.4 221.7 76.4 H226.7 L231.7 81.4 V84.9" fill="none" stroke="#1c1c1c" stroke-width="1.8" stroke-linecap="round" stroke-linejoin="round" /><path d="M226.7 76.4 V79.4 Q226.7 81.4 228.7 81.4 H231.7" fill="none" stroke="#1c1c1c" stroke-width="1.8" stroke-linecap="round" stroke-linejoin="round" /><path d="M223.2 82.4 H223.79999999999998 M223.2 86.10000000000001 H228.2 M223.2 89.4 H228.2 M231.7 87.7 V87.9 M231.7 90.4 V92.4" fill="none" stroke="#1c1c1c" stroke-width="1.8" stroke-linecap="round" stroke-linejoin="round" /><circle cx="375.9" cy="83.8" r="8.1" fill="none" stroke="#1c1c1c" stroke-width="1.7"/><path d="M368.7 87.5 H373.9 M377.9 87.5 H383.09999999999997" fill="none" stroke="#1c1c1c" stroke-width="1.7" stroke-linecap="round" stroke-linejoin="round" /><circle cx="375.9" cy="86.6" r="1.9" fill="none" stroke="#1c1c1c" stroke-width="1.7"/><path d="M375.9 84.7 V80.2" fill="none" stroke="#1c1c1c" stroke-width="1.7" stroke-linecap="round" stroke-linejoin="round" /><circle cx="375.9" cy="77.5" r="0.55" fill="#1c1c1c" stroke="#1c1c1c" stroke-width="1.2"/><circle cx="369.4" cy="84.0" r="0.55" fill="#1c1c1c" stroke="#1c1c1c" stroke-width="1.2"/><circle cx="382.4" cy="84.0" r="0.55" fill="#1c1c1c" stroke="#1c1c1c" stroke-width="1.2"/><circle cx="371.29999999999995" cy="79.5" r="0.55" fill="#1c1c1c" stroke="#1c1c1c" stroke-width="1.2"/><circle cx="380.5" cy="79.5" r="0.55" fill="#1c1c1c" stroke="#1c1c1c" stroke-width="1.2"/><circle cx="550" cy="83.8" r="8.1" fill="none" stroke="#1c1c1c" stroke-width="1.7"/><path d="M542.8 87.5 H548 M552 87.5 H557.2" fill="none" stroke="#1c1c1c" stroke-width="1.7" stroke-linecap="round" stroke-linejoin="round" /><circle cx="550" cy="86.6" r="1.9" fill="none" stroke="#1c1c1c" stroke-width="1.7"/><path d="M550 84.7 V80.2" fill="none" stroke="#1c1c1c" stroke-width="1.7" stroke-linecap="round" stroke-linejoin="round" /><circle cx="550" cy="77.5" r="0.55" fill="#1c1c1c" stroke="#1c1c1c" stroke-width="1.2"/><circle cx="543.5" cy="84.0" r="0.55" fill="#1c1c1c" stroke="#1c1c1c" stroke-width="1.2"/><circle cx="556.5" cy="84.0" r="0.55" fill="#1c1c1c" stroke="#1c1c1c" stroke-width="1.2"/><circle cx="545.4" cy="79.5" r="0.55" fill="#1c1c1c" stroke="#1c1c1c" stroke-width="1.2"/><circle cx="554.6" cy="79.5" r="0.55" fill="#1c1c1c" stroke="#1c1c1c" stroke-width="1.2"/><path d="M694.6 77.6 H692.6 Q690.6 77.6 690.6 79.6 V90.6 Q690.6 92.6 692.6 92.6 H702 Q704 92.6 704 90.6 V79.6 Q704 77.6 702 77.6 H699.8" fill="none" stroke="#1c1c1c" stroke-width="1.7" stroke-linecap="round" stroke-linejoin="round" /><path d="M695 75.6 H699.5 Q700.4 75.6 700.4 76.5 V78.6 Q700.4 79.5 699.5 79.5 H695 Q694.1 79.5 694.1 78.6 V76.5 Q694.1 75.6 695 75.6 Z" fill="none" stroke="#1c1c1c" stroke-width="1.6" stroke-linecap="round" stroke-linejoin="round" /><path d="M694.6 83.2 H699.6 M694.6 86.9 H699.6" fill="none" stroke="#1c1c1c" stroke-width="1.7" stroke-linecap="round" stroke-linejoin="round" /><path d="M796 75.8 H808.3 Q810 75.8 810 77.5 V92.2 L806 88.4 H796 Q794.1 88.4 794.1 86.5 V77.7 Q794.1 75.8 796 75.8 Z" fill="none" stroke="#1c1c1c" stroke-width="1.7" stroke-linecap="round" stroke-linejoin="round" /><path d="M797.4 80.3 H806.4 M797.4 83.9 H806.4" fill="none" stroke="#1c1c1c" stroke-width="1.7" stroke-linecap="round" stroke-linejoin="round" /><path d="M934.4 91.6 Q932.7 91.6 932.7 89.9 V78.3 Q932.7 76.6 934.4 76.6 H938.6 L940.6 78.9 H945.6 Q947.3 78.9 947.3 80.6 V82.4" fill="none" stroke="#1c1c1c" stroke-width="1.7" stroke-linecap="round" stroke-linejoin="round" /><path d="M934.4 91.6 L937.3 83.2 H950.9 L948.4 91.6 Z" fill="none" stroke="#1c1c1c" stroke-width="1.7" stroke-linecap="round" stroke-linejoin="round" /><path d="M1083.9 84.7 V91.6 H1100.3 V84.7 M1092.1 87.3 V76.3 M1088.2 80.1 L1092.1 76.2 L1096 80.1" fill="none" stroke="#1c1c1c" stroke-width="1.8" stroke-linecap="round" stroke-linejoin="round" /><path d="M294 174.6 L288.4 180 L294 185.4" fill="none" stroke="#555555" stroke-width="1.6" stroke-linecap="round" stroke-linejoin="round" /><circle cx="300" cy="355" r="7.8" fill="#c6c6c6" stroke="none" stroke-width="0"/><path d="M297.2 352.2 L302.8 357.8 M302.8 352.2 L297.2 357.8" fill="none" stroke="#ffffff" stroke-width="1.5" stroke-linecap="round" stroke-linejoin="round" /><path d="M2078.6 155 L2084 160.5 L2089.4 155" fill="none" stroke="#ffffff" stroke-width="1.8" stroke-linecap="round" stroke-linejoin="round" /><path d="M2306.27 152.15 L2306.54 150.13 L2309.46 150.13 L2309.73 152.15 L2310.91 152.64 L2312.53 151.41 L2314.59 153.47 L2313.36 155.09 L2313.85 156.27 L2315.87 156.54 L2315.87 159.46 L2313.85 159.73 L2313.36 160.91 L2314.59 162.53 L2312.53 164.59 L2310.91 163.36 L2309.73 163.85 L2309.46 165.87 L2306.54 165.87 L2306.27 163.85 L2305.09 163.36 L2303.47 164.59 L2301.41 162.53 L2302.64 160.91 L2302.15 159.73 L2300.13 159.46 L2300.13 156.54 L2302.15 156.27 L2302.64 155.09 L2301.41 153.47 L2303.47 151.41 L2305.09 152.64 Z" fill="none" stroke="#1c1c1c" stroke-width="1.8" stroke-linecap="round" stroke-linejoin="round" /><circle cx="2308" cy="158" r="3.0" fill="none" stroke="#1c1c1c" stroke-width="1.8"/><circle cx="2364" cy="158" r="7" fill="none" stroke="#1c1c1c" stroke-width="2.6"/><circle cx="1341.0" cy="218.9" r="1.9" fill="#b0b0b0" stroke="none" stroke-width="0"/><circle cx="1347.88" cy="218.9" r="1.9" fill="#b0b0b0" stroke="none" stroke-width="0"/><circle cx="1354.76" cy="218.9" r="1.9" fill="#b0b0b0" stroke="none" stroke-width="0"/><circle cx="1361.64" cy="218.9" r="1.9" fill="#b0b0b0" stroke="none" stroke-width="0"/><circle cx="1368.52" cy="218.9" r="1.9" fill="#b0b0b0" stroke="none" stroke-width="0"/><circle cx="1375.4" cy="218.9" r="1.9" fill="#b0b0b0" stroke="none" stroke-width="0"/><circle cx="1382.28" cy="218.9" r="1.9" fill="#b0b0b0" stroke="none" stroke-width="0"/><circle cx="1389.16" cy="218.9" r="1.9" fill="#b0b0b0" stroke="none" stroke-width="0"/><circle cx="1396.04" cy="218.9" r="1.9" fill="#b0b0b0" stroke="none" stroke-width="0"/><circle cx="1402.92" cy="218.9" r="1.9" fill="#b0b0b0" stroke="none" stroke-width="0"/><circle cx="1341.0" cy="225.9" r="1.9" fill="#b0b0b0" stroke="none" stroke-width="0"/><circle cx="1347.88" cy="225.9" r="1.9" fill="#b0b0b0" stroke="none" stroke-width="0"/><circle cx="1354.76" cy="225.9" r="1.9" fill="#b0b0b0" stroke="none" stroke-width="0"/><circle cx="1361.64" cy="225.9" r="1.9" fill="#b0b0b0" stroke="none" stroke-width="0"/><circle cx="1368.52" cy="225.9" r="1.9" fill="#b0b0b0" stroke="none" stroke-width="0"/><circle cx="1375.4" cy="225.9" r="1.9" fill="#b0b0b0" stroke="none" stroke-width="0"/><circle cx="1382.28" cy="225.9" r="1.9" fill="#b0b0b0" stroke="none" stroke-width="0"/><circle cx="1389.16" cy="225.9" r="1.9" fill="#b0b0b0" stroke="none" stroke-width="0"/><circle cx="1396.04" cy="225.9" r="1.9" fill="#b0b0b0" stroke="none" stroke-width="0"/><circle cx="1402.92" cy="225.9" r="1.9" fill="#b0b0b0" stroke="none" stroke-width="0"/><path d="M2239.27 241.15 L2239.54 239.13 L2242.46 239.13 L2242.73 241.15 L2243.91 241.64 L2245.53 240.41 L2247.59 242.47 L2246.36 244.09 L2246.85 245.27 L2248.87 245.54 L2248.87 248.46 L2246.85 248.73 L2246.36 249.91 L2247.59 251.53 L2245.53 253.59 L2243.91 252.36 L2242.73 252.85 L2242.46 254.87 L2239.54 254.87 L2239.27 252.85 L2238.09 252.36 L2236.47 253.59 L2234.41 251.53 L2235.64 249.91 L2235.15 248.73 L2233.13 248.46 L2233.13 245.54 L2235.15 245.27 L2235.64 244.09 L2234.41 242.47 L2236.47 240.41 L2238.09 241.64 Z" fill="none" stroke="#1c1c1c" stroke-width="1.8" stroke-linecap="round" stroke-linejoin="round" /><circle cx="2241" cy="247" r="3.0" fill="none" stroke="#1c1c1c" stroke-width="1.8"/><path d="M2277.8 254 L2283.6 248.2 M2286.6 245.2 L2292.2 239.6" fill="none" stroke="#1c1c1c" stroke-width="1.8" stroke-linecap="round" stroke-linejoin="round" /><path d="M2275.6 251.2 L2275.6 256.2 L2280.6 256.2 Z M2294.4 243.2 L2294.4 238.2 L2289.4 238.2 Z" fill="#1c1c1c" stroke="#1c1c1c" stroke-width="1.3" stroke-linecap="round" stroke-linejoin="round" /><circle cx="2322.5" cy="246.9" r="1.8" fill="#1c1c1c" stroke="none" stroke-width="0"/><circle cx="2328.9" cy="246.9" r="1.8" fill="#1c1c1c" stroke="none" stroke-width="0"/><circle cx="2335.3" cy="246.9" r="1.8" fill="#1c1c1c" stroke="none" stroke-width="0"/><path d="M1536.9 800.6 V813.4 M1530.5 807 H1543.3" fill="none" stroke="#1c1c1c" stroke-width="1.7" stroke-linecap="round" stroke-linejoin="round" /><path d="M1970.8 804.6 L1976 809.8 L1981.2 804.6" fill="none" stroke="#1c1c1c" stroke-width="1.7" stroke-linecap="round" stroke-linejoin="round" /><path d="M2193 798.9 H2206.5 Q2208 798.9 2208 800.4 V801.9 Q2208 803.2 2207 804 L2202.5 808.5 V813 L2197.7 815.2 V808.5 L2193 804 Q2191.8 803.2 2191.8 801.9 V800.4 Q2191.8 798.9 2193 798.9 Z M2192 802.6 H2208" fill="none" stroke="#1c1c1c" stroke-width="1.7" stroke-linecap="round" stroke-linejoin="round" /><path d="M2258.21 800.96 L2258.51 798.94 L2261.49 798.94 L2261.79 800.96 L2263.01 801.46 L2264.64 800.24 L2266.76 802.36 L2265.54 803.99 L2266.04 805.21 L2268.06 805.51 L2268.06 808.49 L2266.04 808.79 L2265.54 810.01 L2266.76 811.64 L2264.64 813.76 L2263.01 812.54 L2261.79 813.04 L2261.49 815.06 L2258.51 815.06 L2258.21 813.04 L2256.99 812.54 L2255.36 813.76 L2253.24 811.64 L2254.46 810.01 L2253.96 808.79 L2251.94 808.49 L2251.94 805.51 L2253.96 805.21 L2254.46 803.99 L2253.24 802.36 L2255.36 800.24 L2256.99 801.46 Z" fill="none" stroke="#1c1c1c" stroke-width="1.7" stroke-linecap="round" stroke-linejoin="round" /><circle cx="2260" cy="807" r="3.0" fill="none" stroke="#1c1c1c" stroke-width="1.7"/><path d="M2326.8 800.6 A8.5 8.5 0 1 0 2329.5 807.6" fill="none" stroke="#1c1c1c" stroke-width="1.8" stroke-linecap="round" stroke-linejoin="round" /><path d="M2328.6 798 V802.9 H2323.7" fill="none" stroke="#1c1c1c" stroke-width="1.8" stroke-linecap="round" stroke-linejoin="round" /><circle cx="2374.5" cy="807" r="1.8" fill="#1c1c1c" stroke="none" stroke-width="0"/><circle cx="2380.9" cy="807" r="1.8" fill="#1c1c1c" stroke="none" stroke-width="0"/><circle cx="2387.3" cy="807" r="1.8" fill="#1c1c1c" stroke="none" stroke-width="0"/><path d="M23.8 859.8 H36.4 Q38.2 859.8 38.2 861.6 V862.4 Q38.2 863.6 37.3 864.5 L32.5 869.3 V874.3 L28.2 876.2 V869.3 L23.3 864.5 Q22.3 863.6 22.3 862.4 V861.6 Q22.3 859.8 23.8 859.8 Z M22.6 863.2 H38" fill="none" stroke="#3f5fbf" stroke-width="1.8" stroke-linecap="round" stroke-linejoin="round" /><path d="M129.8 929.7 L134.5 923.9 L139.3 929.7 Z" fill="#5a78c6" stroke="none" stroke-width="0" stroke-linecap="round" stroke-linejoin="round" /><path d="M129.8 931.3 L134.5 937 L139.3 931.3 Z" fill="#c9c9c9" stroke="none" stroke-width="0" stroke-linecap="round" stroke-linejoin="round" /><path d="M701 962.4 L705.1 966.4 L709.2 962.4" fill="none" stroke="#a8a8a8" stroke-width="1.4" stroke-linecap="round" stroke-linejoin="round" /><path d="M1678.4 966 H1692.4 L1688.2 961.6" fill="none" stroke="#b8b8b8" stroke-width="1.3" stroke-linecap="round" stroke-linejoin="round" /><path d="M1724.8 958.2 H1739.3999999999999 V971.4 H1724.8 Z M1724.8 962.4 H1739.3999999999999 M1728.6 956.4 V959.6 M1735.6 956.4 V959.6" fill="none" stroke="#b8b8b8" stroke-width="1.3" stroke-linecap="round" stroke-linejoin="round" /><path d="M1806 966 H1820 L1815.8 961.6" fill="none" stroke="#b8b8b8" stroke-width="1.3" stroke-linecap="round" stroke-linejoin="round" /><path d="M1850 958.2 H1864.6 V971.4 H1850 Z M1850 962.4 H1864.6 M1853.8 956.4 V959.6 M1860.8 956.4 V959.6" fill="none" stroke="#b8b8b8" stroke-width="1.3" stroke-linecap="round" stroke-linejoin="round" /><path d="M2351.8 1000.6 L2368.6 1008.2 L2351.8 1015.8000000000001 L2354.6 1008.2 Z M2354.6 1008.2 H2360" fill="none" stroke="#555555" stroke-width="1.7" stroke-linecap="round" stroke-linejoin="round" /><circle cx="2398" cy="1008.2" r="8.2" fill="none" stroke="#d64a4a" stroke-width="1.7"/><path d="M2395.2 1005.4000000000001 L2400.8 1011.0 M2400.8 1005.4000000000001 L2395.2 1011.0" fill="none" stroke="#d64a4a" stroke-width="1.7" stroke-linecap="round" stroke-linejoin="round" /><path d="M2351.8 1038.9 L2368.6 1046.5 L2351.8 1054.1 L2354.6 1046.5 Z M2354.6 1046.5 H2360" fill="none" stroke="#555555" stroke-width="1.7" stroke-linecap="round" stroke-linejoin="round" /><circle cx="2398" cy="1046.5" r="8.2" fill="none" stroke="#d64a4a" stroke-width="1.7"/><path d="M2395.2 1043.7 L2400.8 1049.3 M2400.8 1043.7 L2395.2 1049.3" fill="none" stroke="#d64a4a" stroke-width="1.7" stroke-linecap="round" stroke-linejoin="round" /></svg>
<div style="left:2432px;top:652px;width:3px;height:442px;background:#d6d1cb"></div>
<div style="left:0px;top:1087px;width:2435px;height:7px;background:#d6d1cb"></div>
<div style="left:2360px;top:0px;width:75px;height:648px;background:#d6d1cb"></div>
<svg style="left:0;top:0" width="2435" height="1094" viewBox="0 0 2435 1094"><defs><filter id="sh" x="-5%" y="-50%" width="110%" height="200%"><feDropShadow dx="1" dy="1.5" stdDeviation="1.2" flood-color="#000" flood-opacity="0.35"/></filter></defs><g filter="url(#sh)"><rect x="800.5" y="359.5" width="1186.2" height="35.69999999999999" fill="none" stroke="#0a0af5" stroke-width="3"/><rect x="819.5" y="511.0" width="1212.9" height="40.299999999999955" fill="none" stroke="#c83cf2" stroke-width="3"/><rect x="45.6" y="992.7" width="1894.2" height="31.700000000000045" fill="none" stroke="#c83cf2" stroke-width="3"/><rect x="37.7" y="1032.0" width="1875.3" height="31.700000000000045" fill="none" stroke="#0a0af5" stroke-width="3"/><line x1="925" y1="376.5" x2="1103.9" y2="1046.5" stroke="#0a0af5" stroke-width="4.5" stroke-dasharray="14 5.4"/><line x1="1155.3" y1="377" x2="1307.7" y2="1046.5" stroke="#0a0af5" stroke-width="4.5" stroke-dasharray="14 5.4"/><line x1="921.2" y1="564" x2="961.8" y2="980.8" stroke="#c83cf2" stroke-width="4.5" stroke-dasharray="14 5.4"/><line x1="1155.3" y1="568.9" x2="1195.5" y2="980" stroke="#c83cf2" stroke-width="4.5" stroke-dasharray="14 5.4"/></g></svg>
</body></html>
